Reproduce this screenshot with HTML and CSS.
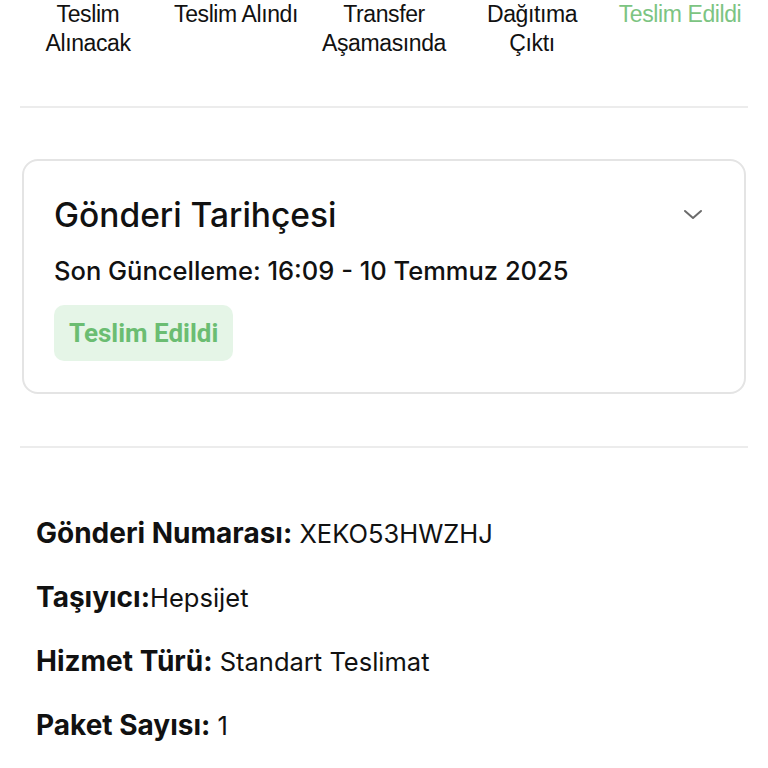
FILE: index.html
```html
<!DOCTYPE html>
<html lang="tr">
<head>
<meta charset="utf-8">
<link rel="stylesheet" href="styles.css">
</head>
<body>
<div class="page">
  <div class="steps">
    <div class="step">Teslim<br>Alınacak</div>
    <div class="step">Teslim Alındı</div>
    <div class="step">Transfer<br>Aşamasında</div>
    <div class="step">Dağıtıma<br>Çıktı</div>
    <div class="step active">Teslim Edildi</div>
  </div>
  <hr class="rule rule-top">
  <div class="card">
    <div class="card-head">
      <h2 class="card-title">Gönderi Tarihçesi</h2>
      <svg class="chev" width="22" height="14" viewBox="0 0 22 14"><path d="M3 3 L11 10 L19 3" fill="none" stroke="#6b6b6b" stroke-width="2" stroke-linecap="round" stroke-linejoin="round"/></svg>
    </div>
    <div class="card-sub">Son Güncelleme: 16:09 - 10 Temmuz 2025</div>
    <div class="badge">Teslim Edildi</div>
  </div>
  <hr class="rule rule-mid">
  <div class="info">
    <div class="row"><b>Gönderi Numarası:</b> XEKO53HWZHJ</div>
    <div class="row"><b>Taşıyıcı:</b>Hepsijet</div>
    <div class="row"><b>Hizmet Türü:</b> Standart Teslimat</div>
    <div class="row"><b>Paket Sayısı:</b> 1</div>
  </div>
</div>
</body>
</html>
```
FILE: styles.css
```css
html, body { margin: 0; padding: 0; background: #fff; }
body { width: 768px; height: 768px; overflow: hidden; }
.page { padding: 0 20px; }
.steps {
  display: grid;
  grid-template-columns: repeat(5, 1fr);
  margin: 0 -6px;
  font-family: "Liberation Sans", Arial, sans-serif;
  font-size: 23px;
  line-height: 29px;
  color: #111;
  text-align: center;
  letter-spacing: -0.4px;
}
.step.active { color: #7cc482; }
.rule { border: 0; height: 2px; background: #ececec; margin: 0; }
.rule-top { margin-top: 48px; }
.card {
  margin: 51px 2px 0;
  border: 2px solid #e4e4e4;
  border-radius: 16px;
  padding: 35px 30px 31px;
  font-family: Inter, "Noto Sans", sans-serif;
  color: #111;
}
.card-head { display: flex; align-items: center; justify-content: space-between; }
.card-title { margin: 0; font-size: 33.5px; font-weight: 500; line-height: 38px; }
.chev { margin-right: 10px; }
.card-sub { margin-top: 22px; font-size: 25.5px; font-weight: 500; line-height: 30px; }
.badge {
  display: inline-block;
  margin-top: 19px;
  background: #e5f5e7;
  color: #6bbd72;
  font-family: Roboto, "Liberation Sans", sans-serif;
  font-weight: 700;
  font-size: 26px;
  line-height: 56px;
  padding: 0 15px;
  border-radius: 10px;
}
.rule-mid { margin-top: 52px; }
.info {
  padding: 70px 0 0 16px;
  font-family: Inter, "Noto Sans", sans-serif;
  color: #111;
  font-size: 25.5px;
}
.row { line-height: 30px; height: 64px; }
.row b { font-size: 28px; font-weight: 650; }
```
